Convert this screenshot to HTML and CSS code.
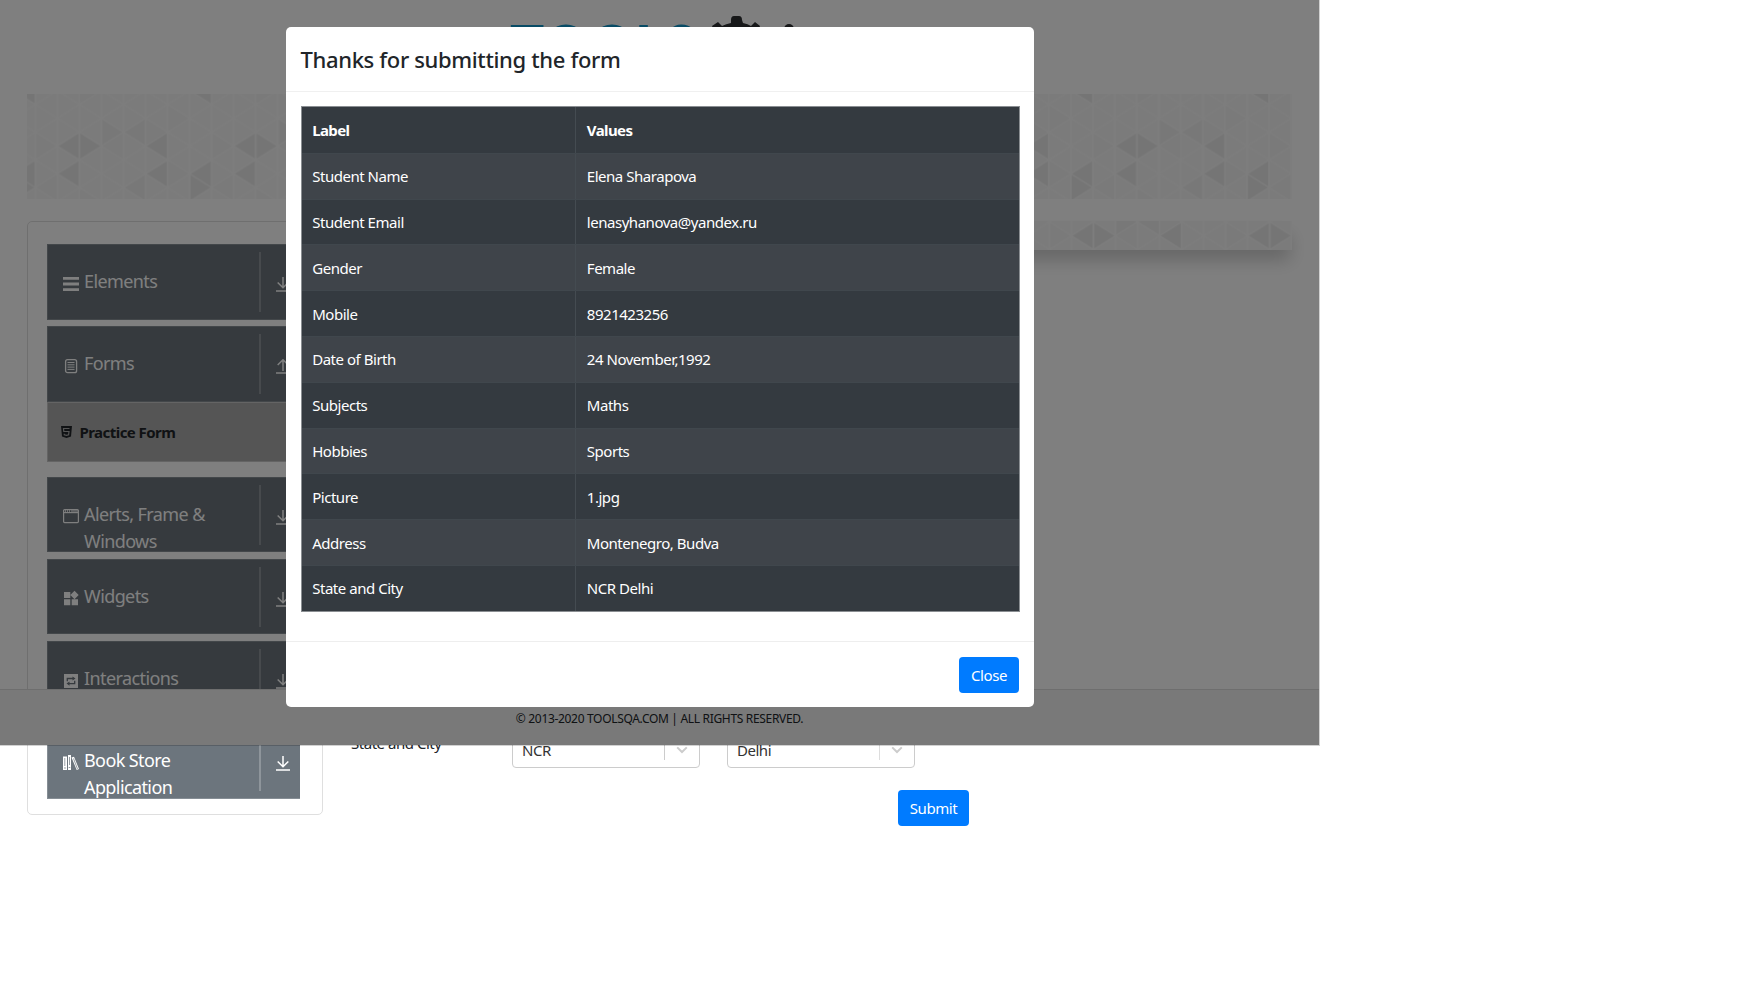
FILE: index.html
```html
<!DOCTYPE html>
<html lang="en">
<head>
<meta charset="utf-8">
<title>ToolsQA - Practice Form</title>
<link rel="stylesheet" href="styles.css">
</head>
<body>
<svg class="defs" aria-hidden="true">
  <defs>
    <g id="mosaic">
      <rect width="8" height="10" fill="#f7f7f7"/>
      <path fill="#f4f4f4" d="M0 4v2l1-1zM2 0v2l1-1zM3 5l1-1v2zM6 2v2l1-1zM4 8l1-1v2zM0 8l1-1v2zM5 3v2l1-1zM6 6v2l1-1zM2 8v2l1-1z"/>
      <path fill="#f1f1f1" d="M3 3v2l1-1zM4 4l1-1v2zM4 8l1-1v2z"/>
      <path fill="#ebebeb" d="M1 5l1-1v2zM2 4v2l1-1zM1 7l1-1v2zM5 5l1-1v2zM5 7l1-1v2zM7 7l1-1v2zM7 7v2l1-1zM7 1l1-1v2z"/>
      <path fill="none" stroke="#fbfbfb" stroke-width=".08" d="M0-8l8 8M0-6l8 8M0-4l8 8M0-2l8 8M0 0l8 8M0 2l8 8M0 4l8 8M0 6l8 8M0 8l8 8M0 0l8-8M0 2l8-8M0 4l8-8M0 6l8-8M0 8l8-8M0 10l8-8M0 12l8-8M0 14l8-8M0 16l8-8M0 0v10M1 0v10M2 0v10M3 0v10M4 0v10M5 0v10M6 0v10M7 0v10M8 0v10"/>
    </g>
    <pattern id="mosaic-banner" patternUnits="userSpaceOnUse" width="8" height="10" patternTransform="translate(8.4 -17.2) scale(22.03 13.85)"><use href="#mosaic"/></pattern>
    <pattern id="mosaic-strip" patternUnits="userSpaceOnUse" width="8" height="10" patternTransform="translate(-351 -54.5) scale(22.03 13.85)"><use href="#mosaic"/></pattern>
    <symbol id="down" viewBox="0 0 14 15"><path d="M7 0v10.5M1.7 5.5L7 10.8l5.300-5.300M0 14h14" fill="none" stroke="#fff" stroke-width="1.5"/></symbol>
    <symbol id="up" viewBox="0 0 14 15"><path d="M7 12V1M1.700 6L7 .8 12.300 6M0 14h14" fill="none" stroke="#fff" stroke-width="1.500"/></symbol>
    <symbol id="chevron" viewBox="0 0 12 8"><path d="M1.200 1.400L6 6l4.800-4.600" fill="none" stroke="#ccc" stroke-width="2"/></symbol>
  </defs>
</svg>

<div class="page">
  <header class="logo">
    <svg width="320" height="72" viewBox="0 0 320 72">
      <text class="logo-text" x="10" y="55.500" textLength="186" lengthAdjust="spacingAndGlyphs">TOOLS</text>
      <path fill="#2e3033" d="M231 5q0-4 3-4h5q3 0 3 4l1 3q5 1 8 3l4-4 5 4-2 5q7 8 7 19a28 28 0 0 1-57 0q0-11 6-19l-2-5 6-4 4 4q4-2 9-3z"/>
      <circle cx="289" cy="14" r="5" fill="#2e3033"/>
    </svg>
  </header>

  <svg class="banner" width="1265" height="105"><rect width="1265" height="105" fill="url(#mosaic-banner)"/></svg>

  <div class="columns">
    <nav class="sidebar">
      <div class="item">
        <svg class="icon" viewBox="0 0 16 16"><path fill="#fff" d="M0 1h16v2.800H0zM0 6.600h16v2.800H0zM0 12.200h16V15H0z"/></svg>
        <span class="name">Elements</span><span class="toggle"><svg class="arrow"><use href="#down"/></svg></span>
      </div>
      <div class="item">
        <svg class="icon" viewBox="0 0 16 16"><rect x="2.600" y="1.700" width="11" height="13" rx="2" fill="none" stroke="#fff" stroke-width="1.300"/><path stroke="#fff" d="M4.500 4.500h7M4.500 6.800h7M4.500 9.100h7M4.500 11.400h7"/></svg>
        <span class="name">Forms</span><span class="toggle"><svg class="arrow"><use href="#up"/></svg></span>
      </div>
      <div class="subitem">
        <svg width="11" height="12" viewBox="0 0 11 12"><path fill="#212529" d="M0 0h11l-1 10.500L5.500 12 1 10.500z"/><path fill="none" stroke="#aaa" stroke-width="1.200" d="M8.500 2.500h-6l.3 3h5.200l-.4 3.300-2.100.6-2.200-.6-.1-1"/></svg>
        <span>Practice Form</span>
      </div>
      <div class="item">
        <svg class="icon" viewBox="0 0 16 16"><rect x=".6" y="1.600" width="14.800" height="13" rx="1" fill="none" stroke="#fff" stroke-width="1.200"/><path stroke="#fff" stroke-width="1.200" d="M1 4.600h14"/><path stroke="#fff" stroke-width="1.500" stroke-dasharray="1 1" d="M2 3h6"/><path stroke="#fff" d="M8 3h7"/></svg>
        <span class="name">Alerts, Frame &amp; Windows</span><span class="toggle"><svg class="arrow"><use href="#down"/></svg></span>
      </div>
      <div class="item">
        <svg class="icon" viewBox="0 0 16 16"><path fill="#fff" d="M1 2h6.300v6H1zM1 9.200h6.300v6H1zM8.700 9.200H15v6H8.700zM11.500.8l4.200 4.200-4.200 4.200L7.300 5z"/></svg>
        <span class="name">Widgets</span><span class="toggle"><svg class="arrow"><use href="#down"/></svg></span>
      </div>
      <div class="item">
        <svg class="icon" viewBox="0 0 16 16"><path fill="#fff" d="M1 1h14v14H1z"/><path fill="none" stroke="#6c757d" stroke-width="1.300" d="M4.300 8.300V5.500h6M11.700 7.700v2.900H5.500"/><path fill="#6c757d" d="M9.500 3.400l3 2.100-3 2.100zM6.500 8.500l-3 2.100 3 2.100z"/></svg>
        <span class="name">Interactions</span><span class="toggle"><svg class="arrow"><use href="#down"/></svg></span>
      </div>
      <div class="item">
        <svg class="icon" viewBox="0 0 16 16"><path fill="#fff" d="M0 1.500h4V15H0zM5 0h3v15H5zM8.500 2.500l2.500-.8L16 14l-2.300 1z"/><path stroke="#6c757d" stroke-width=".7" d="M1.800 3v8M6.500 2v8M10.500 3.500l4 10.500M1 13h2M5.700 12.500h1.600"/></svg>
        <span class="name">Book Store Application</span><span class="toggle"><svg class="arrow"><use href="#down"/></svg></span>
      </div>
    </nav>
    <main class="main">
      <svg class="strip" width="949" height="29"><rect width="949" height="29" fill="url(#mosaic-strip)"/></svg>
      <div class="form-row">
        <label class="form-label">State and City</label>
        <div class="select"><span>NCR</span><i></i><svg width="12" height="8"><use href="#chevron"/></svg></div>
        <div class="select second"><span>Delhi</span><i></i><svg width="12" height="8"><use href="#chevron"/></svg></div>
      </div>
      <button class="btn submit">Submit</button>
    </main>
  </div>

  <footer class="footer">© 2013-2020 TOOLSQA.COM | ALL RIGHTS RESERVED.</footer>
  <div class="backdrop"></div>

  <section class="modal">
    <h4 class="modal-title">Thanks for submitting the form</h4>
    <div class="modal-body">
      <div class="table">
        <div class="row head"><span>Label</span><span>Values</span></div>
        <div class="row"><span>Student Name</span><span>Elena Sharapova</span></div>
        <div class="row"><span>Student Email</span><span>lenasyhanova@yandex.ru</span></div>
        <div class="row"><span>Gender</span><span>Female</span></div>
        <div class="row"><span>Mobile</span><span>8921423256</span></div>
        <div class="row"><span>Date of Birth</span><span>24 November,1992</span></div>
        <div class="row"><span>Subjects</span><span>Maths</span></div>
        <div class="row"><span>Hobbies</span><span>Sports</span></div>
        <div class="row"><span>Picture</span><span>1.jpg</span></div>
        <div class="row"><span>Address</span><span>Montenegro, Budva</span></div>
        <div class="row"><span>State and City</span><span>NCR Delhi</span></div>
      </div>
    </div>
    <div class="modal-footer"><button class="btn close">Close</button></div>
  </section>
</div>
</body>
</html>
```
FILE: styles.css
```css
* { box-sizing: border-box; }
body {
  margin: 0;
  background: #fff;
  color: #212529;
  font-family: "Noto Sans", "Open Sans", sans-serif;
  font-size: 15px;
  letter-spacing: -0.47px;
  overflow: hidden;
}
.defs { position: absolute; width: 0; height: 0; }
.page { position: relative; width: 1319px; height: 994px; padding: 15px 27px 0 27px; }
.logo { height: 79px; padding-left: 473px; }
.logo svg { display: block; }
.logo-text { font: 900 63px Lato, sans-serif; letter-spacing: 0; fill: #1196cb; }
.banner { display: block; }
.columns { display: flex; margin-top: 22px; gap: 20px; }

.sidebar {
  width: 296px;
  height: 594px;
  padding: 22px 19px;
  border: 1px solid #dfdfdf;
  border-radius: 5px;
}
.item {
  display: flex;
  align-items: flex-start;
  width: 253px;
  height: 75.500px;
  margin-bottom: 6.800px;
  padding-left: 15px;
  overflow: hidden;
  background: #6c757d;
  border: 1px solid #868e95;
  border-width: 1px 0 1px 1px;
  color: #fff;
}
.icon { flex: none; width: 16px; height: 16px; margin-top: 30.500px; }
.name {
  flex: none;
  width: 180px;
  padding: 23px 40px 0 5px;
  font-size: 18px;
  line-height: 27px;
  letter-spacing: -0.6px;
}
.toggle {
  flex: none;
  width: 42px;
  height: 60px;
  margin-top: 7px;
  border-left: 2px solid #8e959b;
}
.arrow { display: block; width: 14px; height: 15px; margin: 25px 0 0 15px; }
.subitem {
  display: flex;
  align-items: center;
  gap: 7.500px;
  width: 253px;
  height: 60px;
  margin: -7px 0 15px;
  padding-left: 13px;
  background: #aaa;
  border: 1px solid #c8c8c8;
  font-weight: 700;
  letter-spacing: -0.55px;
}

.main { width: 949px; }
.strip { display: block; box-shadow: 0 12px 18px -2px rgba(0, 0, 0, .2); }
.form-row { display: flex; align-items: flex-start; margin-top: 480px; padding-left: 8px; }
.form-label { width: 161px; padding-top: 2px; line-height: 23px; }
.select {
  display: flex;
  align-items: center;
  width: 188px;
  height: 38px;
  padding: 0 11px 0 9px;
  border: 1px solid #ccc;
  border-radius: 4px;
  color: #333;
}
.select span { flex: 1; padding-top: 2px; }
.select i { width: 1.500px; height: 21px; margin-right: 11px; background: #ccc; }
.select svg { margin-top: 2px; }
.second { margin-left: 27px; }
.second i { background: #ddd; }
.btn {
  height: 36px;
  padding: 0 0 1px;
  border: 0;
  border-radius: 4px;
  background: #007bff;
  color: #fff;
  font: 15px "Noto Sans", sans-serif;
  letter-spacing: -0.4px;
}
.submit { display: block; width: 71px; margin: 22px 0 0 555px; }

.footer {
  position: absolute;
  left: 0;
  top: 689px;
  width: 1319px;
  height: 56px;
  padding-top: 19px;
  background: #f2f2f2;
  border-top: 1px solid #dcdcdc;
  font-size: 12px;
  line-height: 20px;
  letter-spacing: -0.32px;
  text-align: center;
}
.backdrop {
  position: absolute;
  left: 0;
  top: 0;
  width: 1320px;
  height: 746px;
  background: rgba(0, 0, 0, .5) padding-box;
  border: solid rgba(0, 0, 0, .18);
  border-width: 0 1px 1px 0;
}
.modal {
  position: absolute;
  left: 286px;
  top: 27px;
  width: 748px;
  height: 680px;
  background: #fff;
  border-radius: 5px;
}
.modal-title {
  height: 65px;
  margin: 0;
  padding: 16px 0 0 14.500px;
  border-bottom: 1px solid #f0f0f0;
  font-size: 22px;
  font-weight: 500;
  line-height: 32px;
  letter-spacing: -0.35px;
}
.modal-body { height: 549px; padding: 14px 14.500px 0 14.500px; }
.table { border: 1px solid #8a8e92; background: #343a40; color: #fff; }
.row { display: flex; height: 45.800px; border-top: 1px solid #40474d; }
.row span { width: 443px; padding: 12.400px 0 0 10.700px; line-height: 21px; }
.row span:first-child { width: 275px; border-right: 1px solid #444b51; }
.row:nth-child(even) { background: #3f444a; }
.row.head { border-top: 0; font-weight: 700; letter-spacing: -0.6px; }
.head span { padding-top: 13px; }
.modal-footer {
  display: flex;
  justify-content: flex-end;
  padding: 15px 15px 0 0;
  border-top: 1px solid #eee;
}
.close { width: 60px; }
```
